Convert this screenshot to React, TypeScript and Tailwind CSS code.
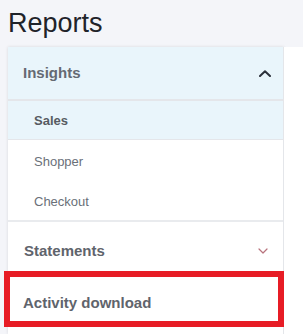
const font = { fontFamily: '"Liberation Sans", Arial, sans-serif' }

function ChevronUp() {
  return (
    <svg width="12" height="7" viewBox="0 0 12 7" fill="none">
      <path d="M1 6 L6 1.3 L11 6" stroke="#2b303a" strokeWidth="2" strokeLinecap="round" strokeLinejoin="round" />
    </svg>
  )
}

function ChevronDown() {
  return (
    <svg width="10" height="6" viewBox="0 0 10 6" fill="none">
      <path d="M1 1 L5 5 L9 1" stroke="#b8737d" strokeWidth="1.2" strokeLinecap="round" strokeLinejoin="round" />
    </svg>
  )
}

const SUB_ITEMS = [
  { label: 'Sales', active: true },
  { label: 'Shopper', active: false },
  { label: 'Checkout', active: false },
]

export default function App() {
  return (
    <div className="w-[303px] h-[334px] overflow-hidden bg-[#f4f5f9] flex flex-col" style={font}>
      {/* Título */}
      <h1 className="pl-2 pt-[7px] h-[47px] text-[27px] leading-[32px] text-[#1f232a]">Reports</h1>

      <div className="flex flex-1">
        {/* Menú lateral */}
        <div className="ml-2 w-[276px] bg-white border-r border-[#e4e6ea] shadow-[0_0_3px_rgba(0,0,0,0.12)] flex flex-col">
          <button className="h-[52px] bg-[#e9f5fb] flex items-center justify-between pl-[15px] pr-[12px] text-[15px] font-bold text-[#656a73]">
            Insights
            <ChevronUp />
          </button>
          <div className="h-[2px] bg-[#e4e6ea]" />

          {SUB_ITEMS.map((item) => (
            <div
              key={item.label}
              className={`flex items-center pl-[26px] text-[13px] ${
                item.active
                  ? 'h-[39px] pt-[2px] bg-[#e9f5fb] font-bold text-[#565b62] border-b border-[#e4e6ea]'
                  : 'h-[40px] pt-[4px] text-[#6a7079]'
              }`}
            >
              {item.label}
            </div>
          ))}
          <div className="h-[2px] bg-[#e9ebee]" />

          <button className="h-[54px] pt-[4px] flex items-center justify-between pl-4 pr-[15px] text-[15px] font-bold text-[#5f646c]">
            Statements
            <ChevronDown />
          </button>

          <div className="relative h-[51px] pt-[4px] flex items-center pl-[15px] text-[15px] font-bold text-[#5f646c]">
            Activity download
            <div className="absolute left-[-4px] top-[-5px] w-[280px] h-[56px] border-[6px] border-[#e71c25]" />
          </div>
        </div>

        {/* Contenido */}
        <div className="flex-1 bg-white" />
      </div>
    </div>
  )
}
